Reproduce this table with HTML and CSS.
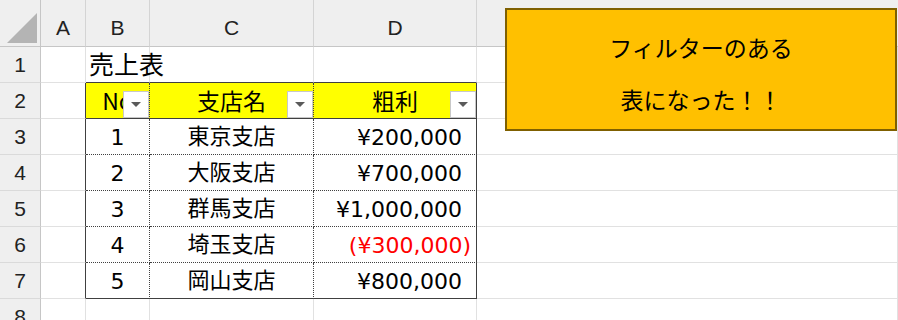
FILE: index.html
```html
<!DOCTYPE html>
<html lang="ja">
<head>
<meta charset="utf-8">
<title>売上表</title>
<link rel="stylesheet" href="styles.css">
</head>
<body>
<div class="sheet">
  <!-- column headers -->
  <div class="hd corner"><span class="tri"></span></div>
  <div class="hd col">A</div>
  <div class="hd col">B</div>
  <div class="hd col">C</div>
  <div class="hd col">D</div>
  <div class="hd col end"></div>

  <!-- row 1 -->
  <div class="hd row">1</div>
  <div class="c"></div>
  <div class="c title top">売上表</div>
  <div class="c top"></div>
  <div class="c top"></div>
  <div class="c"></div>

  <!-- row 2: table header with filter buttons -->
  <div class="hd row">2</div>
  <div class="c lb"></div>
  <div class="c th ctr dv">No<span class="filter"></span></div>
  <div class="c th ctr dv">支店名<span class="filter"></span></div>
  <div class="c th ctr rb">粗利<span class="filter"></span></div>
  <div class="c"></div>

  <!-- rows 3-7 -->
  <div class="hd row">3</div>
  <div class="c lb"></div>
  <div class="c ctr dv dh">1</div>
  <div class="c jp ctr dv dh">東京支店</div>
  <div class="c num rb dh">¥200,000</div>
  <div class="c"></div>

  <div class="hd row">4</div>
  <div class="c lb"></div>
  <div class="c ctr dv dh">2</div>
  <div class="c jp ctr dv dh">大阪支店</div>
  <div class="c num rb dh">¥700,000</div>
  <div class="c"></div>

  <div class="hd row">5</div>
  <div class="c lb"></div>
  <div class="c ctr dv dh">3</div>
  <div class="c jp ctr dv dh">群馬支店</div>
  <div class="c num rb dh">¥1,000,000</div>
  <div class="c"></div>

  <div class="hd row">6</div>
  <div class="c lb"></div>
  <div class="c ctr dv dh">4</div>
  <div class="c jp ctr dv dh">埼玉支店</div>
  <div class="c num neg rb dh">(¥300,000)</div>
  <div class="c"></div>

  <div class="hd row">7</div>
  <div class="c lb"></div>
  <div class="c ctr dv bb">5</div>
  <div class="c jp ctr dv bb">岡山支店</div>
  <div class="c num rb bb">¥800,000</div>
  <div class="c"></div>

  <div class="hd row last">8</div>
  <div class="c"></div>
  <div class="c"></div>
  <div class="c"></div>
  <div class="c"></div>
  <div class="c"></div>

  <!-- floating text box -->
  <div class="note">
    <p>フィルターのある</p>
    <p>表になった！！</p>
  </div>
</div>
</body>
</html>
```

FILE: styles.css
```css
html, body {
  margin: 0;
  padding: 0;
  background: #ffffff;
}

.sheet {
  position: relative;
  width: 898px;
  height: 320px;
  overflow: hidden;
  display: grid;
  grid-template-columns: 41px 45px 64px 164px 163px 1fr;
  grid-template-rows: 47px repeat(7, 36px) 1fr;
  font-family: "DejaVu Sans", "Noto Sans CJK JP", sans-serif;
  color: #000;
}

.sheet > div {
  box-sizing: border-box;
}

/* headers */
.hd {
  background: #efefef;
  color: #222;
  font-family: "Liberation Sans", "Noto Sans", sans-serif;
  font-size: 21px;
  display: flex;
  align-items: center;
  justify-content: center;
}

.col {
  border-right: 1px solid #d4d4d4;
  border-bottom: 1px solid #c6c6c6;
  padding-top: 10px;
}

.col.end {
  border-right: none;
}

.row {
  border-right: 1px solid #c6c6c6;
  border-bottom: 1px solid #dadada;
  padding-top: 1px;
}

.row.last {
  align-items: flex-start;
  padding-top: 6px;
}

.corner {
  position: relative;
  border-right: 1px solid #c6c6c6;
  border-bottom: 1px solid #c6c6c6;
}

.corner .tri {
  position: absolute;
  right: 3px;
  bottom: 3px;
  width: 0;
  height: 0;
  border-left: 30px solid transparent;
  border-bottom: 30px solid #b4b4b4;
}

/* body cells */
.c {
  position: relative;
  border-right: 1px solid #e1e1e1;
  border-bottom: 1px solid #e1e1e1;
  font-size: 22px;
  display: flex;
  align-items: center;
  padding-top: 2px;
  white-space: nowrap;
}

.jp {
  font-family: "Noto Sans CJK JP", sans-serif;
  font-size: 22px;
  padding-top: 0;
  padding-bottom: 5px;
}

.title {
  overflow: visible;
  padding-left: 3px;
  padding-top: 0;
  padding-bottom: 4px;
  font-family: "Noto Sans CJK JP", sans-serif;
  font-size: 25px;
  z-index: 1;
}

.top { border-bottom: 1px solid #404040; }
.lb { border-right: 1px solid #404040; }
.rb { border-right: 1px solid #404040; }
.bb { border-bottom: 1px solid #404040; }
.dv { border-right: 1px dotted #404040; }
.dh { border-bottom: 1px dotted #404040; }

.th {
  background: #ffff00;
  border-bottom: 1px solid #404040;
  font-family: "Noto Sans CJK JP", sans-serif;
  font-size: 23px;
  padding-top: 0;
  padding-bottom: 1px;
}

.ctr {
  justify-content: center;
}

.num {
  justify-content: flex-end;
  padding-right: 14px;
}

.num.neg {
  color: #ff0000;
  padding-right: 5px;
}

.filter {
  position: absolute;
  right: 0;
  bottom: 0;
  width: 26px;
  height: 27px;
  box-sizing: border-box;
  background: #ffffff;
  border: 1px solid #c8c8c8;
  display: flex;
  align-items: center;
  justify-content: center;
}

.filter::after {
  content: "";
  width: 0;
  height: 0;
  border-left: 5px solid transparent;
  border-right: 5px solid transparent;
  border-top: 5px solid #5a5a5a;
}

/* floating text box */
.note {
  position: absolute;
  left: 505px;
  top: 8px;
  width: 392px;
  height: 123px;
  box-sizing: border-box;
  background: #ffc000;
  border: 2px solid #7f6000;
  display: flex;
  flex-direction: column;
  align-items: center;
  justify-content: center;
  padding-top: 6px;
  font-family: "Noto Sans CJK JP", sans-serif;
  font-size: 23px;
  color: #000;
}

.note p {
  margin: 0;
  line-height: 52px;
}
```
